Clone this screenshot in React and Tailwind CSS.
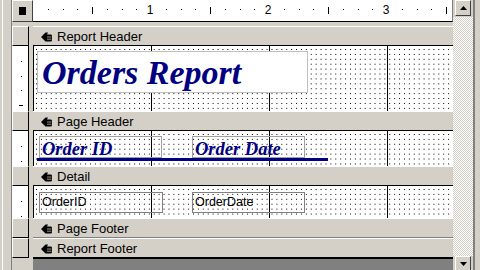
import React from "react";

const EIGHTH = 14.75;
const INCH = 118;

const gray = "bg-[#d4d0c8]";
const raised = "border border-t-white border-l-white border-b-[#404040] border-r-[#404040]";
const dotGrid =
  "bg-white bg-[conic-gradient(at_1px_1px,transparent_75%,#000_0)] bg-[length:4.917px_4.917px] bg-[position:2px_3px]";

const HandIcon = () => (
  <svg width="11" height="10" viewBox="0 0 11 10" className="shrink-0">
    <path d="M0 5 L4.5 0.5 H7 L6 2.5 H10 Q11 2.5 11 4 V8 Q11 9.5 9.5 9.5 H4.5 Z" fill="#000" />
    <path d="M6 5 H10.5 M6 7.2 H10.5" stroke="#d4d0c8" strokeWidth="0.7" />
  </svg>
);

const Arrow = ({ up }) => (
  <svg width="7" height="4" viewBox="0 0 7 4">
    <polygon points={up ? "0,4 3.5,0 7,4" : "0,0 3.5,4 7,0"} fill="#000" />
  </svg>
);

// horizontal ruler marks, 1/8 inch apart
const HRuler = () => {
  const marks = [];
  for (let i = 1; i * EIGHTH < 418; i++) {
    const x = i * EIGHTH;
    if (i % 8 === 0) {
      marks.push(
        <span
          key={i}
          className="absolute top-[3px] -translate-x-1/2 text-[12px] leading-[14px] text-black"
          style={{ left: x - 1 }}
        >
          {i / 8}
        </span>
      );
    } else if (i % 4 === 0) {
      marks.push(<div key={i} className="absolute top-[7px] h-[7px] w-px bg-black" style={{ left: x }} />);
    } else {
      marks.push(<div key={i} className="absolute top-[9px] h-px w-px bg-black" style={{ left: x }} />);
    }
  }
  return <div className="relative h-[22px] w-[420px] bg-white border-b border-black border-r border-r-[#808080]">{marks}</div>;
};

// vertical ruler cell beside a section
const VRuler = ({ height }) => {
  const marks = [];
  for (let i = 1; i * EIGHTH < height - 1; i++) {
    const y = i * EIGHTH;
    marks.push(
      i % 4 === 0 ? (
        <div key={i} className="absolute left-[7px] h-px w-[4px] bg-black" style={{ top: y }} />
      ) : (
        <div key={i} className="absolute left-[9px] h-px w-px bg-black" style={{ top: y }} />
      )
    );
  }
  return <div className="relative w-[17px] bg-white border-r border-black">{marks}</div>;
};

const SectionBar = ({ title, bottom = "border-b-black" }) => (
  <div className="flex h-[20px]">
    <div className={`w-[17px] ${gray} ${raised} border-r-black border-b-black`} />
    <div className={`w-[4px] ${gray}`} />
    <div
      className={`flex w-[420px] items-center gap-[5px] pl-[8px] pt-[1px] ${gray} border-t border-t-white border-b ${bottom} text-[13px] text-black`}
    >
      <HandIcon />
      <span>{title}</span>
    </div>
  </div>
);

const Section = ({ height, className, children }) => (
  <div className={`flex ${className}`}>
    <VRuler height={height} />
    <div className={`w-[4px] ${gray}`} />
    <div className={`relative w-[420px] border-l border-black ${dotGrid}`}>
      {[1, 2, 3].map((n) => (
        <div key={n} className="absolute top-0 h-full w-px bg-black" style={{ left: n * INCH - 1 }} />
      ))}
      {children}
    </div>
  </div>
);

const Label = ({ left, width, children }) => (
  <div
    className="absolute top-[5px] h-[22px] border border-[#a0a0a0] pl-[2px] pt-[2.5px] font-['Liberation_Serif',serif] text-[18.5px] font-bold italic leading-none text-[#000080]"
    style={{ left, width }}
  >
    {children}
  </div>
);

const TextBox = ({ left, width, children }) => (
  <div
    className="absolute top-[6px] h-[21px] border border-[#808080] pl-[2px] pt-[3px] text-[12.5px] leading-none text-black"
    style={{ left, width }}
  >
    {children}
  </div>
);

export default function App() {
  return (
    <div className={`flex h-[270px] w-[480px] overflow-hidden ${gray} font-['Liberation_Sans',Arial,sans-serif]`}>
      {/* window frame, left */}
      <div className={`w-[12px] ${gray} border-r border-[#808080] shadow-[inset_2px_0_0_#d4d0c8,inset_3px_0_0_#fff]`} />

      {/* design surface */}
      <div className="flex w-[441px] flex-col">
        <div className="flex flex-col h-[26px]">
          <div className="flex">
            <div className={`flex h-[22px] w-[21px] items-center justify-center ${gray} ${raised}`}>
              <div className="h-[8px] w-[7px] bg-black" />
            </div>
            <HRuler />
          </div>
          <div className={`h-[4px] ${gray}`} />
        </div>

        <SectionBar title="Report Header" />
        <Section height={65} className="h-[65px]">
          <div className="absolute left-[3px] top-[5px] h-[42px] w-[271px] border border-[#c0c0c0] bg-white pl-[4px] pt-[4px] font-['Liberation_Serif',serif] text-[34px] font-bold italic leading-none text-[#000080]">
            Orders Report
          </div>
        </Section>

        <SectionBar title="Page Header" />
        <Section height={35} className="h-[35px]">
          <Label left={5} width={123}>Order ID</Label>
          <Label left={158} width={113}>Order Date</Label>
          <div className="absolute left-[3px] top-[27px] h-[3px] w-[291px] bg-[#000080]" />
        </Section>

        <SectionBar title="Detail" />
        <Section height={32} className="h-[32px]">
          <TextBox left={5} width={124}>OrderID</TextBox>
          <TextBox left={158} width={113}>OrderDate</TextBox>
        </Section>

        <SectionBar title="Page Footer" bottom="border-b-[#808080]" />
        <SectionBar title="Report Footer" />

        <div className="flex h-[12px]">
          <div className={`w-[21px] ${gray}`} />
          <div className="w-[420px] bg-[#808080] border-t border-black" />
        </div>
      </div>

      {/* vertical scrollbar */}
      <div className="flex w-[20px] flex-col">
        <div className={`h-[17px] ${gray} pl-[2px]`}>
          <div className={`flex h-[16px] w-[16px] items-center justify-center ${gray} ${raised}`}>
            <Arrow up />
          </div>
        </div>
        <div className="flex-1 bg-[conic-gradient(#fff_25%,#d4d0c8_0_50%,#fff_0_75%,#d4d0c8_0)] bg-[length:2px_2px]" />
        <div className={`h-[14px] ${gray} pl-[2px]`}>
          <div className={`flex h-[16px] w-[16px] items-center justify-center ${gray} ${raised}`}>
            <Arrow />
          </div>
        </div>
      </div>

      {/* window frame, right */}
      <div className={`w-[7px] ${gray} border-l-2 border-[#808080]`} />
    </div>
  );
}
